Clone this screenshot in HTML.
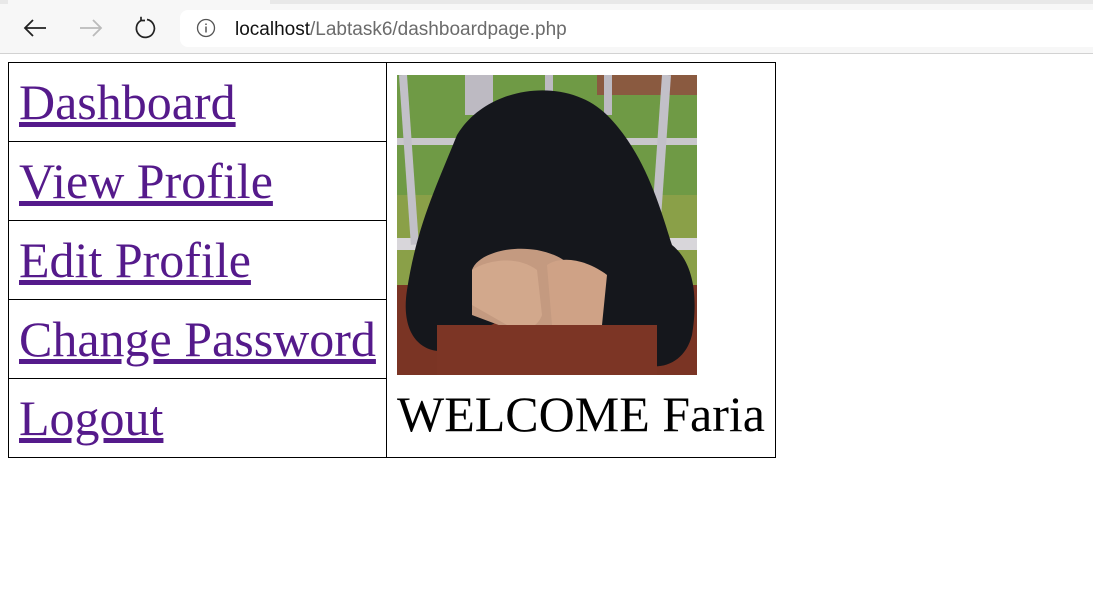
<!DOCTYPE html>
<html><head><meta charset="utf-8"><style>
html,body{margin:0;padding:0;width:1093px;height:606px;overflow:hidden;background:#fff}
.bar{position:absolute;left:0;top:0;width:1093px;height:53px;background:#f7f7f7;border-bottom:1px solid #d2d2d2}
.tabline{position:absolute;left:0;top:0;width:1093px;height:4px;background:#e8e8e8}
.tab{position:absolute;left:8px;top:0;width:262px;height:4px;background:#f7f7f7}
.addr{position:absolute;left:180px;top:10px;width:930px;height:37px;background:#fff;border-radius:8px}
.url{position:absolute;left:235px;top:19px;font:19px "Liberation Sans",sans-serif;color:#6b6b6b}
.url b{font-weight:normal;color:#111}
table{position:absolute;left:8px;top:62px;border-collapse:collapse}
td{border:1px solid #000;padding:0 10px;font:50px "Liberation Serif",serif;vertical-align:middle}
td.l{height:78px;width:357px;white-space:nowrap}
a{color:#551a8b}
td.r{vertical-align:top;padding:12px 10px 0 10px;width:368px}
</style></head><body>
<div class="bar"><div class="tabline"></div><div class="tab"></div>
<svg style="position:absolute;left:22px;top:17px" width="26" height="22" viewBox="0 0 26 22"><path d="M24 11H3M11 3L3 11l8 8" fill="none" stroke="#222" stroke-width="1.8"/></svg>
<svg style="position:absolute;left:78px;top:17px" width="26" height="22" viewBox="0 0 26 22"><path d="M2 11h21M15 3l8 8-8 8" fill="none" stroke="#bbb" stroke-width="1.8"/></svg>
<svg style="position:absolute;left:133px;top:16px" width="24" height="24" viewBox="0 0 24 24"><path d="M8 4.5A9 9 0 1 0 14 3.5M8 4.5V0.8M8 4.5H12" fill="none" stroke="#222" stroke-width="1.7"/></svg>
<div class="addr"></div>
<svg style="position:absolute;left:196px;top:18px" width="20" height="20" viewBox="0 0 20 20"><circle cx="10" cy="10" r="8.5" fill="none" stroke="#555" stroke-width="1.3"/><path d="M10 8.5v6M10 5.5v1.5" stroke="#555" stroke-width="1.5"/></svg>
<div class="url"><b>localhost</b>/Labtask6/dashboardpage.php</div>
</div>
<table>
<tr><td class="l"><a href="#">Dashboard</a></td>
<td class="r" rowspan="5">
<svg width="300" height="300" viewBox="0 0 300 300" style="display:block">
<rect width="300" height="300" fill="#6f9a45"/>
<rect x="200" y="0" width="100" height="20" fill="#8a5a40"/>
<rect x="0" y="120" width="300" height="190" fill="#8aa048"/>
<rect x="0" y="63" width="300" height="7" fill="#c9c7cb"/>
<rect x="0" y="163" width="300" height="12" fill="#d8d6da"/>
<rect x="2" y="0" width="8" height="170" fill="#c2c0c8" transform="rotate(-4 6 0)"/>
<rect x="68" y="0" width="28" height="40" fill="#bdbac2"/>
<rect x="148" y="0" width="8" height="30" fill="#bdbac2"/>
<rect x="207" y="0" width="8" height="40" fill="#bdbac2"/>
<rect x="265" y="0" width="9" height="150" fill="#c2c0c8" transform="rotate(4 270 0)"/>
<rect x="0" y="210" width="300" height="90" fill="#7a3424"/>
<path d="M10 215C20 150 40 110 60 60C90 10 170 0 210 40C250 80 265 140 275 170C300 190 300 230 295 260C285 300 240 300 220 270C200 230 110 230 80 260C50 290 0 280 10 215Z" fill="#15171c"/>
<path d="M75 195C80 180 110 170 140 175C165 180 175 190 180 200L185 240L165 255L115 255L75 240Z" fill="#c49a80"/>
<path d="M75 195C90 185 120 180 140 195L145 240C140 255 120 260 110 250L75 230Z" fill="#d2a88c"/>
<path d="M150 190C165 180 190 185 210 200L205 250C195 260 170 260 155 250Z" fill="#cfa286"/>
<rect x="40" y="250" width="220" height="50" fill="#7c3525"/>
</svg>
<div style="margin-top:10px;white-space:nowrap">WELCOME Faria</div>
</td></tr>
<tr><td class="l"><a href="#">View Profile</a></td></tr>
<tr><td class="l"><a href="#">Edit Profile</a></td></tr>
<tr><td class="l"><a href="#">Change Password</a></td></tr>
<tr><td class="l"><a href="#">Logout</a></td></tr>
</table>
</body></html>
